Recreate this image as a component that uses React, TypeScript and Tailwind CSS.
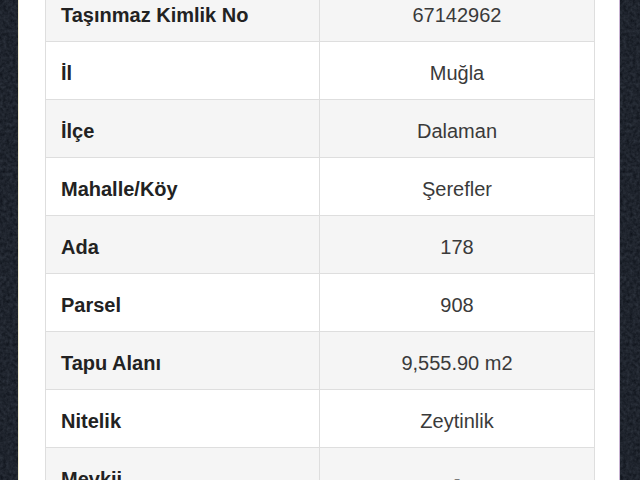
import React from "react";

const rows: [string, string][] = [
  ["Taşınmaz Kimlik No", "67142962"],
  ["İl", "Muğla"],
  ["İlçe", "Dalaman"],
  ["Mahalle/Köy", "Şerefler"],
  ["Ada", "178"],
  ["Parsel", "908"],
  ["Tapu Alanı", "9,555.90 m2"],
  ["Nitelik", "Zeytinlik"],
  ["Mevkii", "-"],
];

function Granite({ id }: { id: string }) {
  return (
    <svg className="absolute inset-0 w-full h-full" preserveAspectRatio="none">
      <filter id={id}>
        <feTurbulence type="fractalNoise" baseFrequency="0.3" numOctaves="3" seed="4" />
        <feColorMatrix
          type="matrix"
          values="0 0 0 0 0.14  0 0 0 0 0.17  0 0 0 0 0.22  0 0 0 0.7 -0.05"
        />
      </filter>
      <rect width="100%" height="100%" fill="#0f131b" />
      <rect width="100%" height="100%" filter={`url(#${id})`} opacity="0.6" />
    </svg>
  );
}

export default function App() {
  return (
    <div className="w-[640px] h-[480px] overflow-hidden flex bg-white font-['Liberation_Sans',Arial,sans-serif]">
      {/* left dark edge */}
      <div className="relative w-[18px] shrink-0">
        <Granite id="gl" />
      </div>
      <div className="w-px shrink-0 bg-[#f1ecd0]" />

      {/* page */}
      <div className="flex-1 bg-white pl-[26px] pr-[24px]">
        <div className="-mt-[17px] border border-[#dedede] border-b-0">
          {rows.map(([k, v], i) => (
            <div
              key={k}
              className={`grid grid-cols-[274px_1fr] h-[58px] border-b border-[#dedede] ${
                i % 2 === 0 ? "bg-[#f5f5f5]" : "bg-white"
              }`}
            >
              <div className="flex items-center pl-[15px] pt-[5px] border-r border-[#dedede] text-[20px] font-bold text-[#222]">
                {k}
              </div>
              <div className="flex items-center justify-center pt-[5px] text-[20px] text-[#3a3a3a]">
                {v}
              </div>
            </div>
          ))}
        </div>
      </div>

      {/* right dark edge */}
      <div className="w-px shrink-0 bg-[#c8b3d2]" />
      <div className="relative w-[20px] shrink-0">
        <Granite id="gr" />
      </div>
    </div>
  );
}
